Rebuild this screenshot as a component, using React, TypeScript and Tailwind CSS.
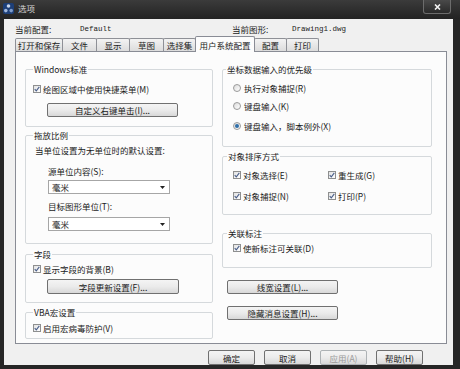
import React from 'react'

// Win7 style small controls, scaled to the screenshot (~0.72)

function Check({ label, className = '' }: { label: string; className?: string }) {
  return (
    <div className={`flex items-center h-[10px] ${className}`}>
      <span className="w-[8px] h-[8px] border border-[#8e8f8f] bg-gradient-to-br from-[#e2e2e2] to-white flex items-center justify-center shrink-0">
        <svg width="6" height="6" viewBox="0 0 6 6">
          <path d="M0.7 3.1 L2.3 4.8 L5.3 0.9" fill="none" stroke="#4a5f8a" strokeWidth="1.1" />
        </svg>
      </span>
      <span className="ml-[2px] whitespace-nowrap">{label}</span>
    </div>
  )
}

function Radio({ label, on = false, className = '' }: { label: string; on?: boolean; className?: string }) {
  return (
    <div className={`flex items-center h-[10px] ${className}`}>
      <span className="w-[8px] h-[8px] rounded-full border border-[#9a9a9a] bg-gradient-to-br from-[#dcdcdc] to-white flex items-center justify-center shrink-0">
        {on && <span className="w-[4px] h-[4px] rounded-full bg-[#2f6ea8]" />}
      </span>
      <span className="ml-[3px] whitespace-nowrap">{label}</span>
    </div>
  )
}

function Btn({ label, className = '', disabled = false }: { label: string; className?: string; disabled?: boolean }) {
  return (
    <div
      className={`flex items-center justify-center rounded-[2px] border bg-gradient-to-b from-[#f4f4f4] via-[#ebebeb] to-[#d8d8d8] whitespace-nowrap ${
        disabled ? 'border-[#adb2b5] text-[#9a9a9a]' : 'border-[#707070]'
      } ${className}`}
    >
      {label}
    </div>
  )
}

function Combo({ value, className = '' }: { value: string; className?: string }) {
  return (
    <div className={`flex items-center justify-between w-[122px] h-[14px] border border-[#a6a6a6] bg-white pl-[3px] pr-[4px] ${className}`}>
      <span>{value}</span>
      <svg width="5" height="3" viewBox="0 0 5 3">
        <path d="M0 0 H5 L2.5 3 Z" fill="#222" />
      </svg>
    </div>
  )
}

function Group({
  title,
  className = '',
  children,
}: {
  title: string
  className?: string
  children?: React.ReactNode
}) {
  return (
    <fieldset className={`border border-[#d5d9dc] rounded-[2px] min-w-0 ${className}`}>
      <legend className="px-[1px] leading-[10px] whitespace-nowrap">{title}</legend>
      {children}
    </fieldset>
  )
}

const tabs = [
  { name: '打开和保存', w: 'w-[48px]' },
  { name: '文件', w: 'w-[35px]' },
  { name: '显示', w: 'w-[34px]' },
  { name: '草图', w: 'w-[35px]' },
  { name: '选择集', w: 'w-[33px]' },
  { name: '用户系统配置', w: 'w-[60px]', active: true },
  { name: '配置', w: 'w-[33px]' },
  { name: '打印', w: 'w-[33px]' },
]

export default function App() {
  return (
    <div className="w-[460px] h-[369px] bg-[#262626] flex flex-col overflow-hidden font-['Noto_Sans_CJK_SC',sans-serif] text-[8.5px] leading-[10px] text-[#1b1b1b]">
      {/* Title bar */}
      <div className="h-[19px] flex items-start bg-gradient-to-b from-[#3b3b3b] to-[#232323] shrink-0">
        <svg className="mt-[3px] ml-[3px]" width="11" height="11" viewBox="0 0 11 11">
          <rect x="0" y="0" width="11" height="11" rx="2" fill="#1d3f78" />
          <circle cx="5.5" cy="3" r="1.8" fill="#c9d6ea" />
          <circle cx="2.8" cy="7.6" r="1.8" fill="#9fb6da" />
          <circle cx="8.2" cy="7.6" r="1.8" fill="#7f9ccb" />
        </svg>
        <span className="ml-[4px] mt-[3px] text-[#d6d6d6]">选项</span>
        <div className="flex-1" />
        <div className="mr-[9px] w-[28px] h-[14px] rounded-b-[3px] border border-t-0 border-[#6c6c6c] bg-gradient-to-b from-[#4a4a4a] to-[#2a2a2a] flex items-center justify-center">
          <svg width="7" height="6" viewBox="0 0 7 6">
            <path d="M1 0.5 L6 5.5 M6 0.5 L1 5.5" stroke="#f2f2f2" strokeWidth="1.6" />
          </svg>
        </div>
      </div>

      {/* Client area */}
      <div className="ml-[4px] mr-[7px] h-[346px] bg-[#f0f0f0] flex flex-col shrink-0">
        {/* Header */}
        <div className="pl-[11px] pt-[5px] h-[15px] flex items-center">
          <span className="w-[65px]">当前配置:</span>
          <span className="w-[152px] font-['Liberation_Mono',monospace] text-[7.5px]">Default</span>
          <span className="w-[60px]">当前图形:</span>
          <span className="font-['Liberation_Mono',monospace] text-[7.5px]">Drawing1.dwg</span>
        </div>

        {/* Tabs */}
        <div className="pl-[11px] h-[16px] mt-[1px] flex items-end">
          {tabs.map((t, i) =>
            t.active ? (
              <div
                key={t.name}
                className={`${t.w} h-[16px] -mb-px -ml-px relative z-10 bg-[#fcfcfc] border border-b-0 border-[#898c95] rounded-t-[2px] flex items-center justify-center whitespace-nowrap`}
              >
                {t.name}
              </div>
            ) : (
              <div
                key={t.name}
                className={`${t.w} h-[13px] ${i > 0 ? '-ml-px' : ''} bg-gradient-to-b from-[#f3f3f3] to-[#dcdcdc] border border-b-0 border-[#8e9096] rounded-t-[2px] flex items-center justify-center whitespace-nowrap`}
              >
                {t.name}
              </div>
            ),
          )}
        </div>

        {/* Tab page */}
        <div className="ml-[11px] w-[432px] h-[293px] border border-[#898c95] bg-[#fcfcfc] flex gap-[9px] pl-[9px] pt-[12px]">
          {/* Left column */}
          <div className="w-[188px] flex flex-col">
            <Group title="Windows标准" className="h-[63px] pl-[7px]">
              <Check label="绘图区域中使用快捷菜单(M)" className="mt-[10px]" />
              <Btn label="自定义右键单击(I)..." className="mt-[9px] ml-[14px] w-[131px] h-[14px]" />
            </Group>

            <Group title="拖放比例" className="h-[114px] mt-[3px] pl-[7px]">
              <div className="mt-[5px] ml-[2px] whitespace-nowrap">当单位设置为无单位时的默认设置:</div>
              <div className="mt-[11px] ml-[15px]">源单位内容(S):</div>
              <Combo value="毫米" className="mt-[4px] ml-[15px]" />
              <div className="mt-[7px] ml-[15px]">目标图形单位(T):</div>
              <Combo value="毫米" className="mt-[6px] ml-[15px]" />
            </Group>

            <Group title="字段" className="h-[54px] mt-[5px] pl-[7px]">
              <Check label="显示字段的背景(B)" className="mt-[5px]" />
              <Btn label="字段更新设置(F)..." className="mt-[5px] ml-[14px] w-[132px] h-[15px]" />
            </Group>

            <Group title="VBA宏设置" className="h-[32px] mt-[4px] pl-[7px]">
              <Check label="启用宏病毒防护(V)" className="mt-[6px]" />
            </Group>
          </div>

          {/* Right column */}
          <div className="w-[210px] flex flex-col">
            <Group title="坐标数据输入的优先级" className="h-[83px] pl-[3px]">
              <div className="ml-[7px]">
                <Radio label="执行对象捕捉(R)" className="mt-[9px]" />
                <Radio label="键盘输入(K)" className="mt-[8px]" />
                <Radio label="键盘输入，脚本例外(X)" on className="mt-[10px]" />
              </div>
            </Group>

            <Group title="对象排序方式" className="h-[64px] mt-[4px] pl-[4px]">
              <div className="ml-[6px] grid grid-cols-[95px_1fr]">
                <Check label="对象选择(E)" className="mt-[9px]" />
                <Check label="重生成(G)" className="mt-[9px]" />
                <Check label="对象捕捉(N)" className="mt-[11px]" />
                <Check label="打印(P)" className="mt-[11px]" />
              </div>
            </Group>

            <Group title="关联标注" className="h-[40px] mt-[13px] pl-[4px]">
              <Check label="使新标注可关联(D)" className="mt-[5px] ml-[6px]" />
            </Group>

            <Btn label="线宽设置(L)..." className="mt-[12px] ml-[5px] w-[111px] h-[14px]" />
            <Btn label="隐藏消息设置(H)..." className="mt-[12px] ml-[5px] w-[111px] h-[14px]" />
          </div>
        </div>

        {/* Dialog buttons */}
        <div className="mt-[6px] pr-[30px] flex justify-end gap-[9px]">
          <Btn label="确定" className="w-[47px] h-[15px]" />
          <Btn label="取消" className="w-[47px] h-[15px]" />
          <Btn label="应用(A)" disabled className="w-[47px] h-[15px]" />
          <Btn label="帮助(H)" className="w-[47px] h-[15px]" />
        </div>
      </div>
    </div>
  )
}
